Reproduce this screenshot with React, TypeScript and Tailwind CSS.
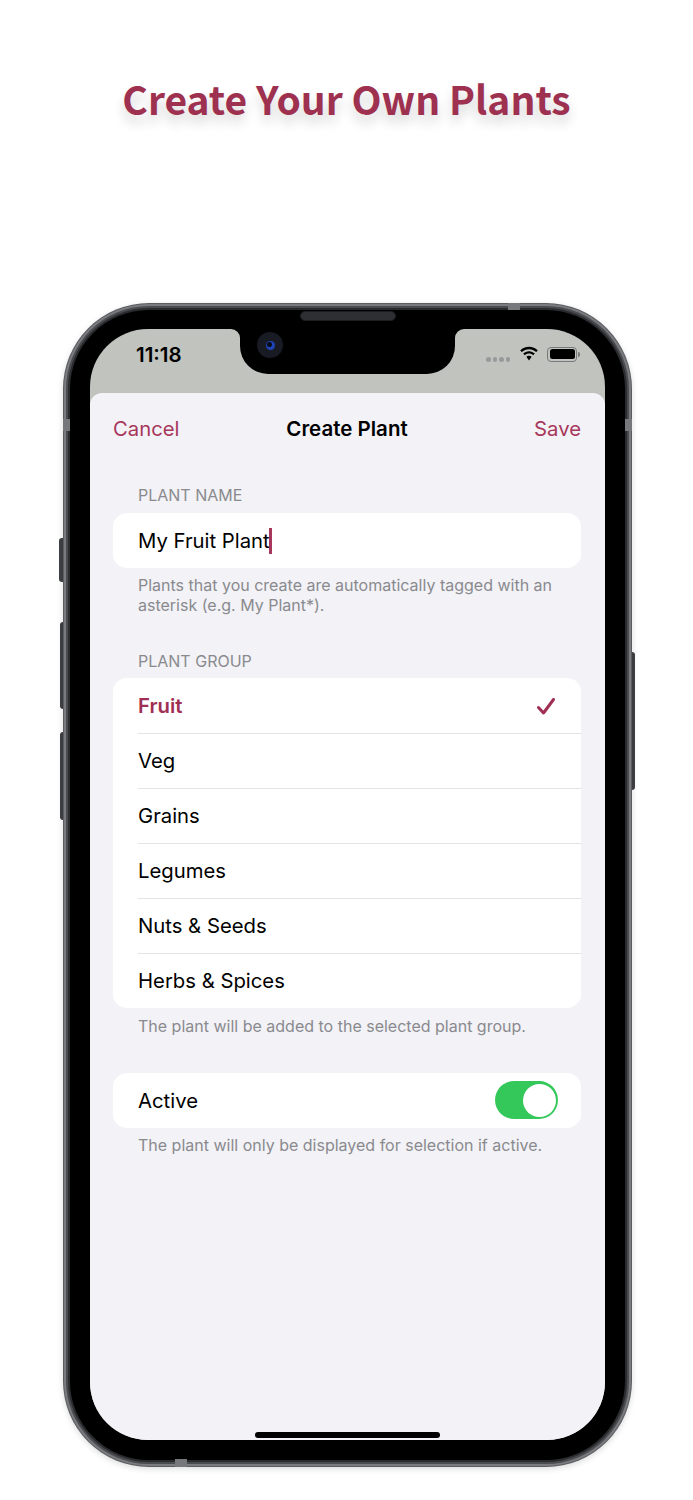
const GROUPS = ['Fruit', 'Veg', 'Grains', 'Legumes', 'Nuts & Seeds', 'Herbs & Spices']

function SectionHeader({ label, top }: { label: string; top: string }) {
  return <div className={`${top} pl-[25px] h-[20px] text-[16px] leading-[20px] text-[#8a8a8e]`}>{label}</div>
}

function Footer({ pad, children }: { pad: string; children: React.ReactNode }) {
  return <div className={`${pad} pl-[25px] pr-[20px] text-[16px] leading-[20px] text-[#8a8a8e]`}>{children}</div>
}

function StatusIcons() {
  return (
    <div className="flex items-center mt-[3px]">
      <div className="flex gap-[2px] mt-[11px] mr-[9px]">
        {[0, 1, 2, 3].map((i) => (
          <span key={i} className="w-[4.5px] h-[4.5px] rounded-full bg-[#97999a]" />
        ))}
      </div>
      <svg width="20" height="16" viewBox="0 0 20 16" className="mr-[8px]">
        <path d="M10 3.2c2.8 0 5.3 1.1 7.2 2.9l1.6-1.7C16.5 2.200 13.400.8 10 .8S3.500 2.200 1.200 4.400l1.600 1.700C4.700 4.300 7.200 3.200 10 3.200z" fill="#000" />
        <path d="M10 7.600c1.600 0 3.100.6 4.200 1.700l1.600-1.700C14.300 6.100 12.300 5.200 10 5.200s-4.300.9-5.800 2.400l1.600 1.700C6.900 8.200 8.400 7.600 10 7.600z" fill="#000" />
        <path d="M10 9.800c-1 0-1.900.4-2.600 1L10 14.600l2.600-3.800c-.7-.6-1.600-1-2.600-1z" fill="#000" />
      </svg>
      <div className="relative w-[30px] h-[15px] rounded-[4px] border border-[#77797a] p-[1.5px]">
        <div className="w-full h-full rounded-[2.5px] bg-black" />
        <div className="absolute right-[-4px] top-[4px] w-[2px] h-[5px] rounded-r-[2px] bg-[#77797a]" />
      </div>
    </div>
  )
}

function Notch() {
  return (
    <div className="absolute left-[150px] top-0 w-[215px] h-[45px] bg-black rounded-b-[28px]">
      <div className="absolute left-[-9px] top-0 w-[9px] h-[9px] bg-black">
        <div className="w-full h-full bg-[#c1c3bf] rounded-tr-[9px]" />
      </div>
      <div className="absolute right-[-9px] top-0 w-[9px] h-[9px] bg-black">
        <div className="w-full h-full bg-[#c1c3bf] rounded-tl-[9px]" />
      </div>
      <div className="absolute left-[17px] top-[3px] w-[26px] h-[26px] rounded-full bg-[#191b24] flex items-center justify-center">
        <div className="w-[9px] h-[9px] rounded-full bg-[#1d45b5] flex items-center justify-center">
          <div className="w-[5px] h-[5px] rounded-full bg-[#070b1c] ml-[-1px] mt-[-1px]" />
        </div>
      </div>
    </div>
  )
}

function Toggle() {
  return (
    <div className="w-[63px] h-[38px] mt-[-2px] rounded-full bg-[#34c759] flex items-center justify-end pr-[2.500px]">
      <div className="w-[33px] h-[33px] rounded-full bg-white" />
    </div>
  )
}

function Sheet() {
  return (
    <div className="flex-1 bg-[#f2f2f7] rounded-t-[12px]">
      <div className="h-[72px] pt-[1px] pl-[23px] pr-[24px] flex items-center justify-between text-[20.300px]">
        <span className="text-[#a8375c] w-[80px]">Cancel</span>
        <span className="font-semibold text-black text-[20.500px]">Create Plant</span>
        <span className="text-[#a8375c] w-[80px] text-right">Save</span>
      </div>

      <div className="pl-[23px] pr-[24px]">
        <SectionHeader label="PLANT NAME" top="mt-[20px]" />
        <div className="mt-[8px] h-[55px] rounded-[14px] bg-white pl-[25px] flex items-center text-[20.300px] text-black">
          <span className="mt-[1px]">My Fruit Plant</span>
          <span className="w-[3px] h-[26px] ml-[-1px] bg-[#a8375c]" />
        </div>
        <Footer pad="pt-[7px]">
          Plants that you create are automatically tagged with an asterisk (e.g. My Plant*).
        </Footer>

        <SectionHeader label="PLANT GROUP" top="mt-[36px]" />
        <div className="mt-[7px] rounded-[14px] bg-white pl-[25px]">
          {GROUPS.map((g, i) => (
            <div
              key={g}
              className={
                i === 0
                  ? 'h-[55px] pt-[1px] flex items-center justify-between pr-[26px] text-[20.300px] font-semibold text-[#a02f54]'
                  : 'h-[55px] pt-[1px] flex items-center border-t border-[#e3e3e6] text-[20.300px] text-black'
              }
            >
              <span>{g}</span>
              {i === 0 && (
                <svg width="18" height="17" viewBox="0 0 18 17">
                  <path d="M1.500 9.500 6.500 15 16.500 1.500" fill="none" stroke="#a02f54" strokeWidth="3" strokeLinecap="round" strokeLinejoin="round" />
                </svg>
              )}
            </div>
          ))}
        </div>
        <Footer pad="pt-[8px]">The plant will be added to the selected plant group.</Footer>

        <div className="mt-[37px] h-[55px] pt-[1px] rounded-[14px] bg-white pl-[25px] pr-[23px] flex items-center justify-between text-[20.300px] text-black">
          <span>Active</span>
          <Toggle />
        </div>
        <Footer pad="pt-[7px]">The plant will only be displayed for selection if active.</Footer>
      </div>
    </div>
  )
}

function Phone() {
  return (
    <div className="relative ml-[63px] mt-[303px] w-[569px] h-[1164px]">
      {/* side buttons */}
      <div className="absolute left-[-4px] top-[235px] w-[5px] h-[44px] rounded-l-[3px] bg-[#3f4045]" />
      <div className="absolute left-[-3px] top-[319px] w-[4px] h-[87px] rounded-l-[3px] bg-[#3f4045]" />
      <div className="absolute left-[-3px] top-[429px] w-[4px] h-[88px] rounded-l-[3px] bg-[#3f4045]" />
      <div className="absolute right-[-3px] top-[349px] w-[4px] h-[138px] rounded-r-[3px] bg-[#3f4045]" />

      <div className="relative w-full h-full rounded-[86px] bg-[#5c5d61] p-[1px] shadow-[0_2px_6px_rgba(0,0,0,0.14)]">
        <div className="w-full h-full rounded-[85px] bg-[#7a7b7f] p-[2px]">
          <div className="w-full h-full rounded-[83px] bg-[#4a4b4f] p-[2px]">
            <div className="w-full h-full rounded-[81px] bg-[#2a2b2e] p-[2px]">
              <div className="relative w-full h-full rounded-[79px] bg-black pt-[19px] pb-[20px] px-[20px]">
                <div className="relative w-full h-full rounded-[58px] overflow-hidden bg-[#c1c3bf] flex flex-col">
                  <div className="h-[64px] pl-[46px] pr-[28px] pt-[14px] flex justify-between items-start">
                    <span className="text-[20.500px] leading-[24px] font-semibold text-black">11:18</span>
                    <StatusIcons />
                  </div>
                  <Sheet />
                  <Notch />
                  <div className="absolute left-[165px] bottom-[2px] w-[185px] h-[6.500px] rounded-full bg-black" />
                </div>
                <div className="absolute left-[230px] top-[1px] w-[96px] h-[10px] rounded-full bg-[#2e2f32] border border-[#1c1d20]" />
              </div>
            </div>
          </div>
        </div>
      </div>

      {/* antenna bands */}
      <div className="absolute left-[445px] top-0 w-[12px] h-[7px] bg-[#77787c]" />
      <div className="absolute left-[112px] bottom-0 w-[12px] h-[8px] bg-[#77787c]" />
      <div className="absolute left-0 top-[116px] w-[7px] h-[12px] bg-[#77787c]" />
      <div className="absolute right-0 top-[116px] w-[7px] h-[12px] bg-[#77787c]" />
    </div>
  )
}

export default function App() {
  return (
    <div className="relative w-[693px] h-[1500px] overflow-hidden bg-white font-['Inter','Liberation_Sans',sans-serif]">
      <h1 className="absolute inset-x-0 top-[67px] text-center text-[39px] leading-[62px] font-bold text-[#9e3050] font-['Noto_Sans_CJK_SC','Noto_Sans',sans-serif] [text-shadow:0_8px_12px_rgba(0,0,0,0.16)]">
        Create Your Own Plants
      </h1>
      <div className="flex">
        <Phone />
      </div>
    </div>
  )
}
